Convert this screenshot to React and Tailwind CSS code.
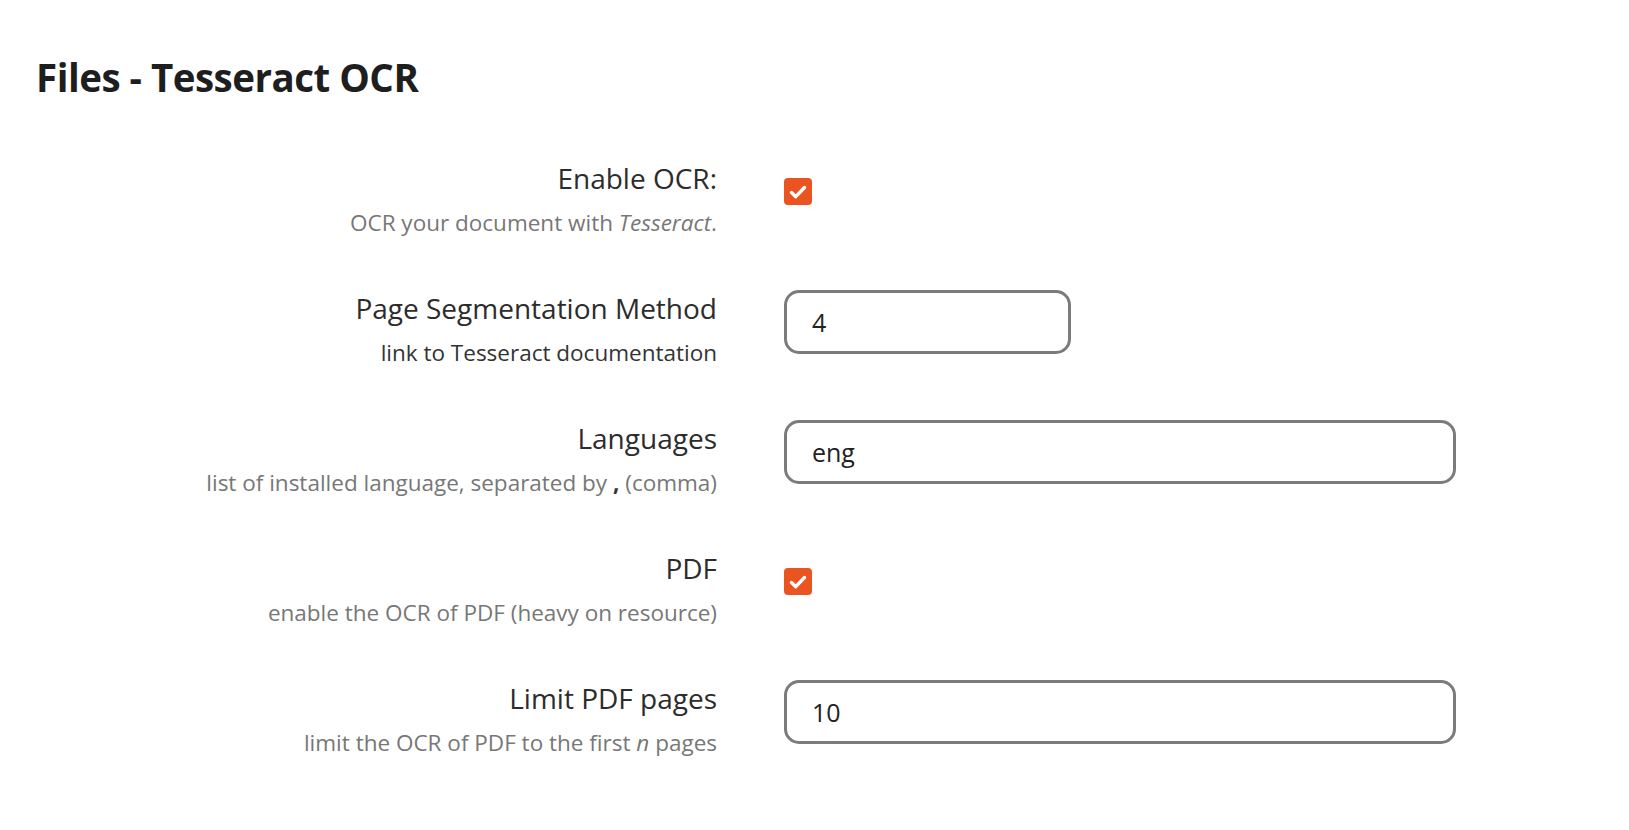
import React, { useState } from 'react';

const rows = [
  { label: 'Enable OCR:', type: 'check', value: true, desc: <>OCR your document with <em>Tesseract</em>.</> },
  { label: 'Page Segmentation Method', type: 'text', value: '4', width: 'w-[287px]', link: true, desc: 'link to Tesseract documentation' },
  { label: 'Languages', type: 'text', value: 'eng', width: 'w-[672px]', desc: <>list of installed language, separated by <b className="font-bold text-[#333]">,</b> (comma)</> },
  { label: 'PDF', type: 'check', value: true, desc: 'enable the OCR of PDF (heavy on resource)' },
  { label: 'Limit PDF pages', type: 'text', value: '10', width: 'w-[672px]', desc: <>limit the OCR of PDF to the first <em>n</em> pages</> },
];

function Checkbox({ checked, onChange }) {
  return (
    <button
      onClick={onChange}
      className={`mt-[18px] w-[28px] h-[27px] rounded-[4px] flex items-center justify-center ${checked ? 'bg-[#e95420]' : 'bg-white border-2 border-[#888]'}`}
    >
      {checked && (
        <svg width="24" height="24" viewBox="0 0 24 24" fill="none">
          <path d="M5.5 12.5l4.3 4.2L18.5 7.5" stroke="#fff" strokeWidth="3.4" strokeLinecap="round" strokeLinejoin="round" />
        </svg>
      )}
    </button>
  );
}

export default function App() {
  const [values, setValues] = useState(rows.map(r => r.value));
  const update = (i, v) => setValues(prev => prev.map((p, j) => (j === i ? v : p)));

  return (
    <div className="min-h-screen bg-white px-[36px] pt-[52px]" style={{ fontFamily: '"Open Sans", "Noto Sans", sans-serif' }}>
      {/* Title */}
      <h1 className="text-[38.5px] leading-[50px] font-bold text-[#1e1e1e] tracking-[-0.5px]">Files - Tesseract OCR</h1>

      <div className="mt-[58px] flex flex-col gap-[52px]">
        {rows.map((r, i) => (
          <div key={r.label} className="grid grid-cols-[681px_1fr] gap-x-[67px] items-start">
            <div className="flex flex-col items-end text-right">
              <span className="text-[28px] leading-[36px] text-[#2c2c2c]">{r.label}</span>
              <span className={`mt-[12px] text-[22.5px] leading-[30px] ${r.link ? 'text-[#333]' : 'text-[#777]'}`}>{r.desc}</span>
            </div>
            <div className="h-[64px] flex items-start">
              {r.type === 'check' ? (
                <Checkbox checked={values[i]} onChange={() => update(i, !values[i])} />
              ) : (
                <input
                  value={values[i]}
                  onChange={e => update(i, e.target.value)}
                  className={`${r.width} h-[64px] rounded-[15px] border-[3px] border-[#7b7b7b] px-[25px] text-[25px] text-[#222] outline-none`}
                />
              )}
            </div>
          </div>
        ))}
      </div>
    </div>
  );
}
